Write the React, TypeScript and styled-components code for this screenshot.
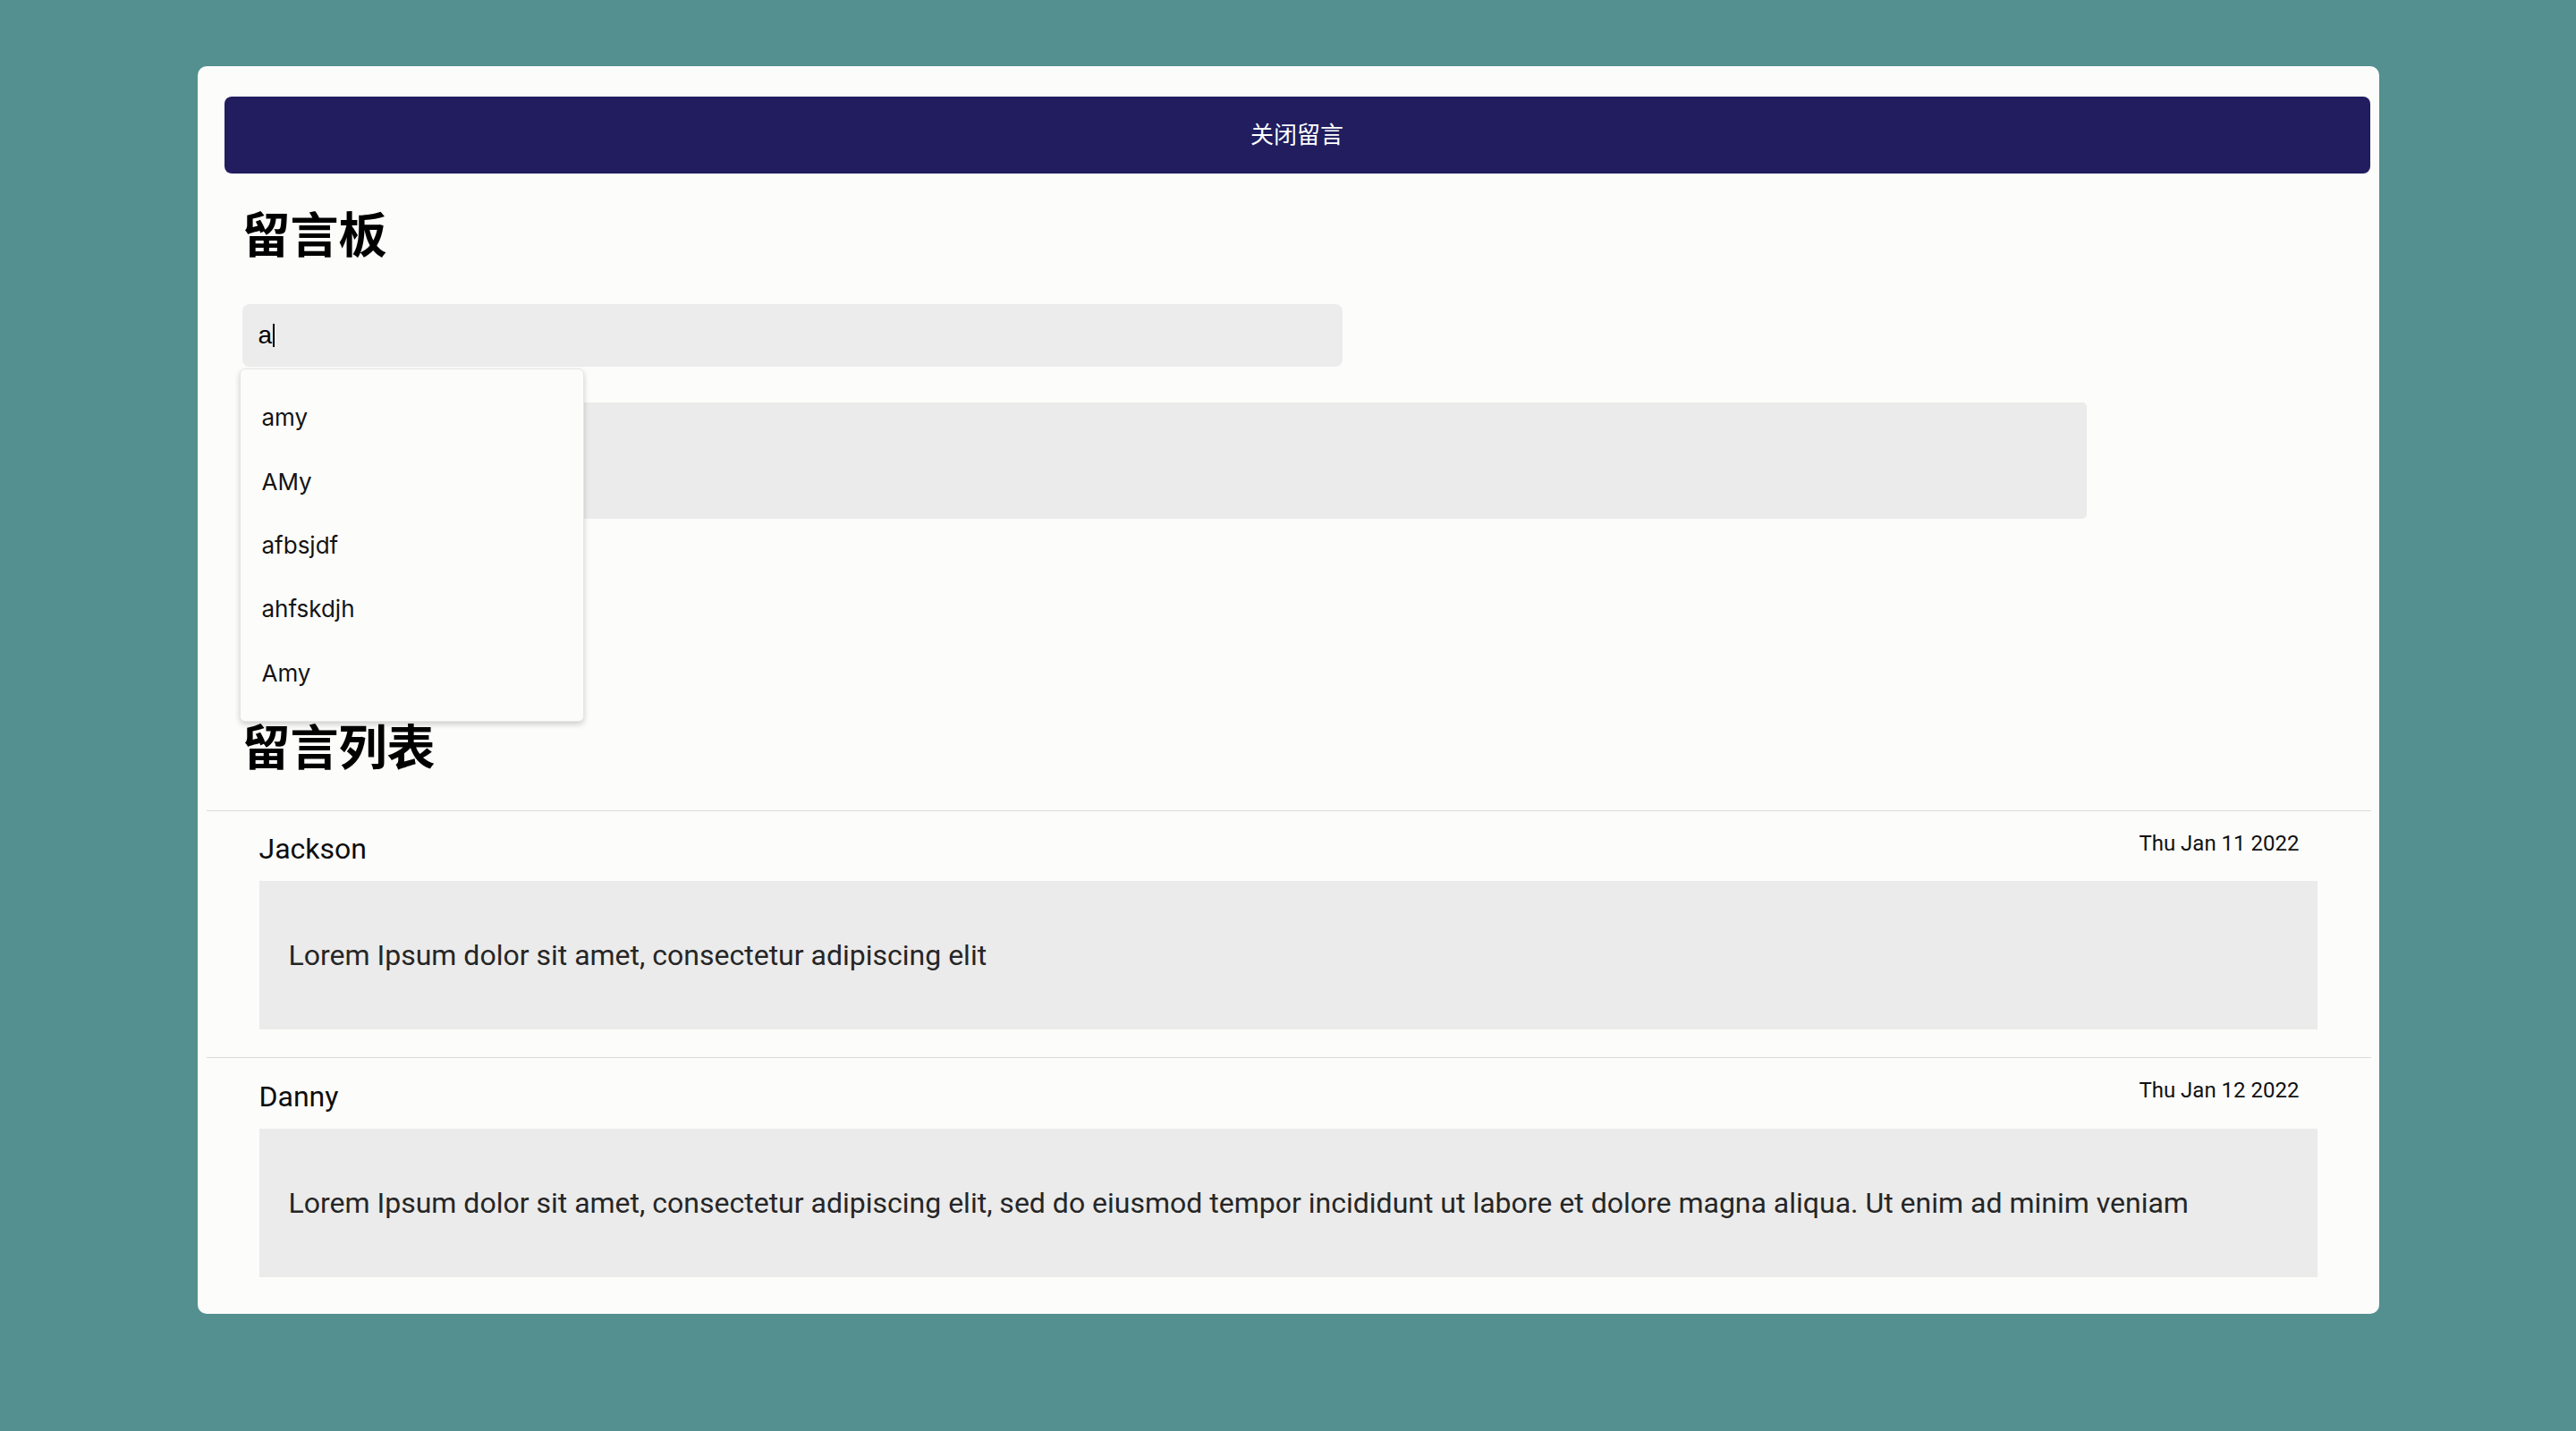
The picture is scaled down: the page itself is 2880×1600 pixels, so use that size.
import React from 'react';
import styled, { createGlobalStyle } from 'styled-components';

const Global = createGlobalStyle`
  html, body {
    margin: 0;
    padding: 0;
    background: #53908f;
  }
  body {
    font-family: Roboto, "Noto Sans CJK SC", sans-serif;
  }
  * { box-sizing: border-box; }
`;

const Page = styled.div`
  min-height: 1600px;
  padding-top: 74px;
`;

const Card = styled.main`
  width: 2439px;
  margin: 0 auto;
  background: #fcfcfb;
  border-radius: 10px;
  padding: 34px 0 10px;
`;

const CloseBar = styled.button`
  display: block;
  width: calc(100% - 40px);
  height: 86px;
  margin: 0 10px 0 30px;
  padding: 0 0 5px;
  border: none;
  border-radius: 8px;
  background: #211d5f;
  color: #ffffff;
  font-family: "Noto Sans CJK SC", sans-serif;
  font-size: 26px;
  cursor: pointer;
`;

const FormSection = styled.section`
  padding-left: 50px;
`;

const Title = styled.h1<{ $top: number }>`
  margin: ${(p) => p.$top}px 0 0;
  font-family: "Noto Sans CJK SC", sans-serif;
  font-weight: 700;
  font-size: 54px;
  line-height: 55px;
  color: #000;
`;

const InputWrap = styled.div`
  position: relative;
  width: 1230px;
  margin-top: 53.5px;
`;

const FakeInput = styled.div`
  display: flex;
  align-items: center;
  height: 70px;
  padding-left: 18px;
  background: #ececec;
  border-radius: 8px;
  font-family: "Liberation Sans", Arial, sans-serif;
  font-size: 28px;
  color: #000;
`;

const Caret = styled.span`
  display: inline-block;
  width: 2px;
  height: 26px;
  margin-left: 1px;
  background: #000;
`;

const Dropdown = styled.ul`
  position: absolute;
  top: calc(100% + 2px);
  left: -3px;
  width: 385px;
  margin: 0;
  padding: 18px 0;
  list-style: none;
  background: #fcfcfb;
  border: 1px solid #e6e6e6;
  border-radius: 6px;
  box-shadow: 0 3px 6px rgba(0, 0, 0, 0.18);
  z-index: 2;
`;

const Option = styled.li`
  height: 71.4px;
  display: flex;
  align-items: center;
  padding-left: 24px;
  font-family: Inter, "Noto Sans", sans-serif;
  font-size: 26px;
  color: #141414;
`;

const TextArea = styled.div`
  width: 2062px;
  height: 130px;
  margin-top: 40px;
  background: #ebebeb;
  border-radius: 5px;
`;

const List = styled.ul`
  margin: 46px 0 0;
  padding: 0;
  list-style: none;
`;

const Item = styled.li`
  margin: 0 9px 0 10px;
  padding: 22px 60px 31px 59px;
  border-top: 1px solid #dadada;
`;

const ItemHead = styled.div`
  display: flex;
  justify-content: space-between;
  align-items: flex-start;
`;

const Name = styled.span`
  margin-top: 1.5px;
  font-size: 32px;
  color: #0d0d0d;
`;

const DateText = styled.span`
  padding-right: 20px;
  font-size: 24px;
  color: #111;
`;

const Body = styled.div`
  margin-top: 17px;
  padding: 64px 33px;
  background: #ebebeb;
  font-size: 32px;
  color: #262626;
`;

const suggestions = ['amy', 'AMy', 'afbsjdf', 'ahfskdjh', 'Amy'];

const messages = [
  {
    name: 'Jackson',
    date: 'Thu Jan 11 2022',
    text: 'Lorem Ipsum dolor sit amet, consectetur adipiscing elit',
  },
  {
    name: 'Danny',
    date: 'Thu Jan 12 2022',
    text:
      'Lorem Ipsum dolor sit amet, consectetur adipiscing elit, sed do eiusmod tempor incididunt ut labore et dolore magna aliqua. Ut enim ad minim veniam',
  },
];

export default function App() {
  return (
    <Page>
      <Global />
      <Card>
        <CloseBar>关闭留言</CloseBar>
        <FormSection>
          <Title $top={37.5}>留言板</Title>
          <InputWrap>
            <FakeInput>
              a<Caret />
            </FakeInput>
            <Dropdown>
              {suggestions.map((s) => (
                <Option key={s}>{s}</Option>
              ))}
            </Dropdown>
          </InputWrap>
          <TextArea />
          <Title $top={224.5}>留言列表</Title>
        </FormSection>
        <List>
          {messages.map((m) => (
            <Item key={m.name}>
              <ItemHead>
                <Name>{m.name}</Name>
                <DateText>{m.date}</DateText>
              </ItemHead>
              <Body>{m.text}</Body>
            </Item>
          ))}
        </List>
      </Card>
    </Page>
  );
}
